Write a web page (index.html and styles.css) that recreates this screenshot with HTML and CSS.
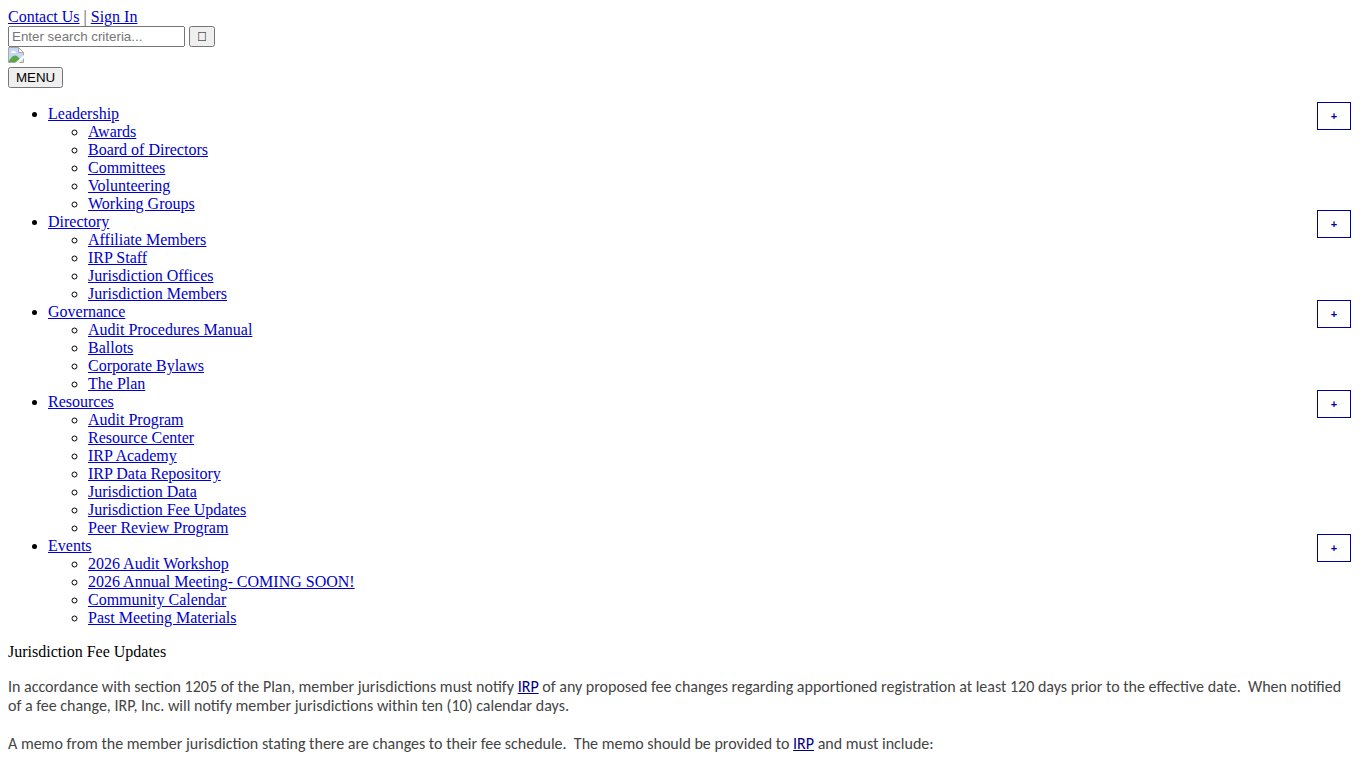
FILE: index.html
```html
<!DOCTYPE html>
<html lang="en">
	<head>
		<meta charset="utf-8">
		<title>Jurisdiction Fee Updates</title>
		<link rel="stylesheet" href="styles.css">
	</head>
	<body>
		<div class="account"><a href="#">Contact Us</a> <span class="divider">|</span> <a href="#">Sign In</a></div>
		<form class="search">
			<input type="text" placeholder="Enter search criteria..." aria-label="Search">
			<button type="button" aria-label="Search">&#xf002;</button>
		</form>
		<div class="logo">
			<svg width="16" height="16" viewBox="0 0 16 16" role="img" aria-label="Logo">
				<path d="M.5 .5h10l5 5v10h-15z" fill="#c6d7f5" stroke="#a8a8a8"/>
				<path d="M10.500 .5v5h5z" fill="#fff" stroke="#a8a8a8"/>
				<path d="M1 14q4-7 8-5l3 3-3 3H1z" fill="#5aa846"/>
				<path d="M3 6q0-2 2-2 2-1 3 2z" fill="#fff"/>
				<path d="M7 16l9-8v3l-5 5z" fill="#fff"/>
			</svg>
		</div>
		<div class="menu-row"><button type="button">MENU</button></div>
		<nav>
			<ul class="menu">
				<li><a href="#">Leadership</a><button class="toggle" type="button">+</button>
					<ul>
						<li><a href="#">Awards</a></li>
						<li><a href="#">Board of Directors</a></li>
						<li><a href="#">Committees</a></li>
						<li><a href="#">Volunteering</a></li>
						<li><a href="#">Working Groups</a></li>
					</ul>
				</li>
				<li><a href="#">Directory</a><button class="toggle" type="button">+</button>
					<ul>
						<li><a href="#">Affiliate Members</a></li>
						<li><a href="#">IRP Staff</a></li>
						<li><a href="#">Jurisdiction Offices</a></li>
						<li><a href="#">Jurisdiction Members</a></li>
					</ul>
				</li>
				<li><a href="#">Governance</a><button class="toggle" type="button">+</button>
					<ul>
						<li><a href="#">Audit Procedures Manual</a></li>
						<li><a href="#">Ballots</a></li>
						<li><a href="#">Corporate Bylaws</a></li>
						<li><a href="#">The Plan</a></li>
					</ul>
				</li>
				<li><a href="#">Resources</a><button class="toggle" type="button">+</button>
					<ul>
						<li><a href="#">Audit Program</a></li>
						<li><a href="#">Resource Center</a></li>
						<li><a href="#">IRP Academy</a></li>
						<li><a href="#">IRP Data Repository</a></li>
						<li><a href="#">Jurisdiction Data</a></li>
						<li><a href="#">Jurisdiction Fee Updates</a></li>
						<li><a href="#">Peer Review Program</a></li>
					</ul>
				</li>
				<li><a href="#">Events</a><button class="toggle" type="button">+</button>
					<ul>
						<li><a href="#">2026 Audit Workshop</a></li>
						<li><a href="#">2026 Annual Meeting- COMING SOON!</a></li>
						<li><a href="#">Community Calendar</a></li>
						<li><a href="#">Past Meeting Materials</a></li>
					</ul>
				</li>
			</ul>
		</nav>
		<div class="title">Jurisdiction Fee Updates</div>
		<div class="content">
			<p>In accordance with section 1205 of the Plan, member jurisdictions must notify <a href="#">IRP</a> of any proposed fee changes regarding apportioned registration at least 120 days prior to the effective date.&nbsp; When notified of a fee change, IRP, Inc. will notify member jurisdictions within ten (10) calendar days.</p>
			<p>A memo from the member jurisdiction stating there are changes to their fee schedule.&nbsp; The memo should be provided to <a href="#">IRP</a> and must include:</p>
		</div>
	</body>
</html>
```

FILE: styles.css
```css
body {
	margin: 8px;
	font-family: "Liberation Serif", "Times New Roman", serif;
	font-size: 16px;
	line-height: 18px;
	color: #000;
}
a {
	color: #0000cc;
}
.divider {
	color: #555;
}
.search {
	margin: 0;
}
.search input {
	box-sizing: border-box;
	width: 177px;
}
.logo {
	height: 20px;
}
.menu {
	margin: 17px 0 16px;
}
.menu > li {
	position: relative;
}
.toggle {
	position: absolute;
	top: -3px;
	right: 7px;
	width: 34px;
	height: 28px;
	border: 1px solid #0000a0;
	background: #fff;
	color: #0000a0;
	font-size: 11px;
	font-weight: bold;
}
.content {
	margin-top: 16px;
	font-family: Carlito, Calibri, Lato, sans-serif;
	font-size: 16px;
	line-height: 19px;
	color: #444;
}
.content p {
	margin: 0 0 19px;
}
.content a {
	color: #000080;
}
```
